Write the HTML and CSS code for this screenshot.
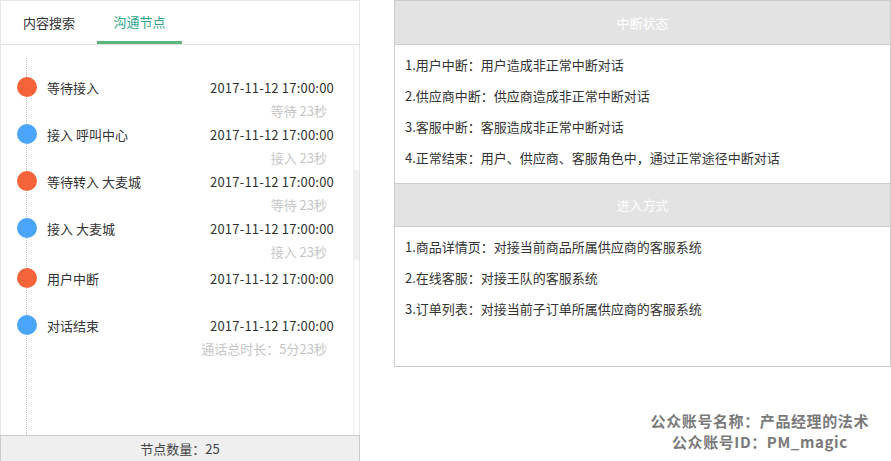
FILE: index.html
```html
<!DOCTYPE html>
<html lang="zh-CN">
<head>
    <meta charset="UTF-8">
    <meta name="viewport" content="width=device-width, initial-scale=1.0">
    <title>沟通节点</title>
    <link rel="stylesheet" href="styles.css">
</head>
<body>
    <div class="node-panel">
        <div class="tabs">
            <div class="tab tab-search">内容搜索</div>
            <div class="tab tab-nodes active">沟通节点</div>
        </div>
        <div class="node-body">
            <div class="timeline">
                <div class="node">
                    <div class="node-row">
                        <span class="dot orange"></span>
                        <span class="node-title">等待接入</span>
                        <span class="node-time">2017-11-12 17:00:00</span>
                    </div>
                    <div class="node-sub">等待 23秒</div>
                </div>
                <div class="node">
                    <div class="node-row">
                        <span class="dot blue"></span>
                        <span class="node-title">接入 呼叫中心</span>
                        <span class="node-time">2017-11-12 17:00:00</span>
                    </div>
                    <div class="node-sub">接入 23秒</div>
                </div>
                <div class="node">
                    <div class="node-row">
                        <span class="dot orange"></span>
                        <span class="node-title">等待转入 大麦城</span>
                        <span class="node-time">2017-11-12 17:00:00</span>
                    </div>
                    <div class="node-sub">等待 23秒</div>
                </div>
                <div class="node">
                    <div class="node-row">
                        <span class="dot blue"></span>
                        <span class="node-title">接入 大麦城</span>
                        <span class="node-time">2017-11-12 17:00:00</span>
                    </div>
                    <div class="node-sub">接入 23秒</div>
                </div>
                <div class="node node-gap">
                    <div class="node-row">
                        <span class="dot orange"></span>
                        <span class="node-title">用户中断</span>
                        <span class="node-time">2017-11-12 17:00:00</span>
                    </div>
                    <div class="node-sub"></div>
                </div>
                <div class="node">
                    <div class="node-row">
                        <span class="dot blue"></span>
                        <span class="node-title">对话结束</span>
                        <span class="node-time">2017-11-12 17:00:00</span>
                    </div>
                    <div class="node-sub">通话总时长：5分23秒</div>
                </div>
            </div>
            <div class="scroll-track">
                <div class="scroll-thumb"></div>
            </div>
        </div>
        <div class="node-footer">节点数量：25</div>
    </div>

    <div class="side">
        <div class="info-panel">
            <div class="info-head">中断状态</div>
            <div class="info-list">
                <div class="info-item">1.用户中断：用户造成非正常中断对话</div>
                <div class="info-item">2.供应商中断：供应商造成非正常中断对话</div>
                <div class="info-item">3.客服中断：客服造成非正常中断对话</div>
                <div class="info-item">4.正常结束：用户、供应商、客服角色中，通过正常途径中断对话</div>
            </div>
            <div class="info-head info-head-second">进入方式</div>
            <div class="info-list info-list-last">
                <div class="info-item">1.商品详情页：对接当前商品所属供应商的客服系统</div>
                <div class="info-item">2.在线客服：对接王队的客服系统</div>
                <div class="info-item">3.订单列表：对接当前子订单所属供应商的客服系统</div>
            </div>
        </div>
        <div class="credit">
            <div>公众账号名称：产品经理的法术</div>
            <div>公众账号ID：PM_magic</div>
        </div>
    </div>
</body>
</html>
```

FILE: styles.css
```css
body {
    margin: 0;
    display: flex;
    align-items: flex-start;
    gap: 34px;
    background: #fff;
    font-family: "Noto Sans CJK SC", "Noto Sans", sans-serif;
    font-size: 13px;
    color: #333;
}

/* left: communication nodes */
.node-panel {
    width: 360px;
    height: 461px;
    box-sizing: border-box;
    border: 1px solid #e6e6e6;
    border-bottom: none;
    display: flex;
    flex-direction: column;
}

.tabs {
    display: flex;
    height: 44px;
    box-sizing: border-box;
    border-bottom: 1px solid #e3e3e3;
}

.tab {
    height: 43px;
    line-height: 43px;
    text-align: center;
    box-sizing: border-box;
    color: #333;
}

.tab-search {
    width: 96px;
}

.tab-nodes {
    width: 85px;
}

.tab.active {
    color: #2ea68a;
    border-bottom: 3px solid #5cb57c;
    line-height: 40px;
    padding-top: 1px;
}

.node-body {
    flex: 1;
    display: flex;
}

.timeline {
    flex: 1;
    position: relative;
    padding: 30px 19px 0 0;
}

.timeline::before {
    content: "";
    position: absolute;
    left: 25px;
    top: 13px;
    bottom: 0;
    border-left: 1px dotted #bdbdbd;
}

.node {
    position: relative;
    height: 47px;
}

.node-gap {
    margin-top: 3px;
}

.node-row {
    display: flex;
    align-items: center;
    height: 24px;
}

.dot {
    width: 20px;
    height: 20px;
    border-radius: 50%;
    margin-left: 16px;
    flex-shrink: 0;
}

.dot.orange {
    background: #f5633a;
}

.dot.blue {
    background: #4ba5fa;
}

.node-title {
    margin-left: 10px;
    flex: 1;
    color: #333;
}

.node-time {
    color: #333;
    letter-spacing: 0.2px;
}

.node-sub {
    height: 23px;
    line-height: 23px;
    text-align: right;
    padding-right: 7px;
    color: #c6c6c6;
}

.scroll-track {
    width: 5px;
    border-left: 1px solid #eeeeee;
}

.scroll-thumb {
    margin-top: 125px;
    height: 90px;
    background: #f1f1f1;
}

.node-footer {
    height: 26px;
    line-height: 25px;
    box-sizing: border-box;
    margin: 0 -1px 0 -1px;
    border: 1px solid #cccccc;
    border-bottom: none;
    background: #efefef;
    text-align: center;
    color: #444;
}

/* right: info tables */
.side {
    width: 497px;
    display: flex;
    flex-direction: column;
}

.info-panel {
    height: 367px;
    box-sizing: border-box;
    border: 1px solid #cccccc;
    display: flex;
    flex-direction: column;
}

.info-head {
    height: 43px;
    line-height: 43px;
    background: #e3e3e3;
    color: #fff;
    text-align: center;
    border-bottom: 1px solid #cccccc;
}

.info-head-second {
    border-top: 1px solid #cccccc;
    height: 42px;
    line-height: 42px;
}

.info-list {
    height: 138px;
    box-sizing: border-box;
    padding: 4px 10px 0 10px;
}

.info-list-last {
    flex: 1;
}

.info-item {
    height: 31px;
    line-height: 31px;
    color: #333;
}

.credit {
    align-self: flex-end;
    margin: 43px 22px 0 0;
    text-align: center;
    font-size: 15px;
    line-height: 21px;
    letter-spacing: 0.6px;
    font-weight: bold;
    color: #7a7a7a;
}
```
